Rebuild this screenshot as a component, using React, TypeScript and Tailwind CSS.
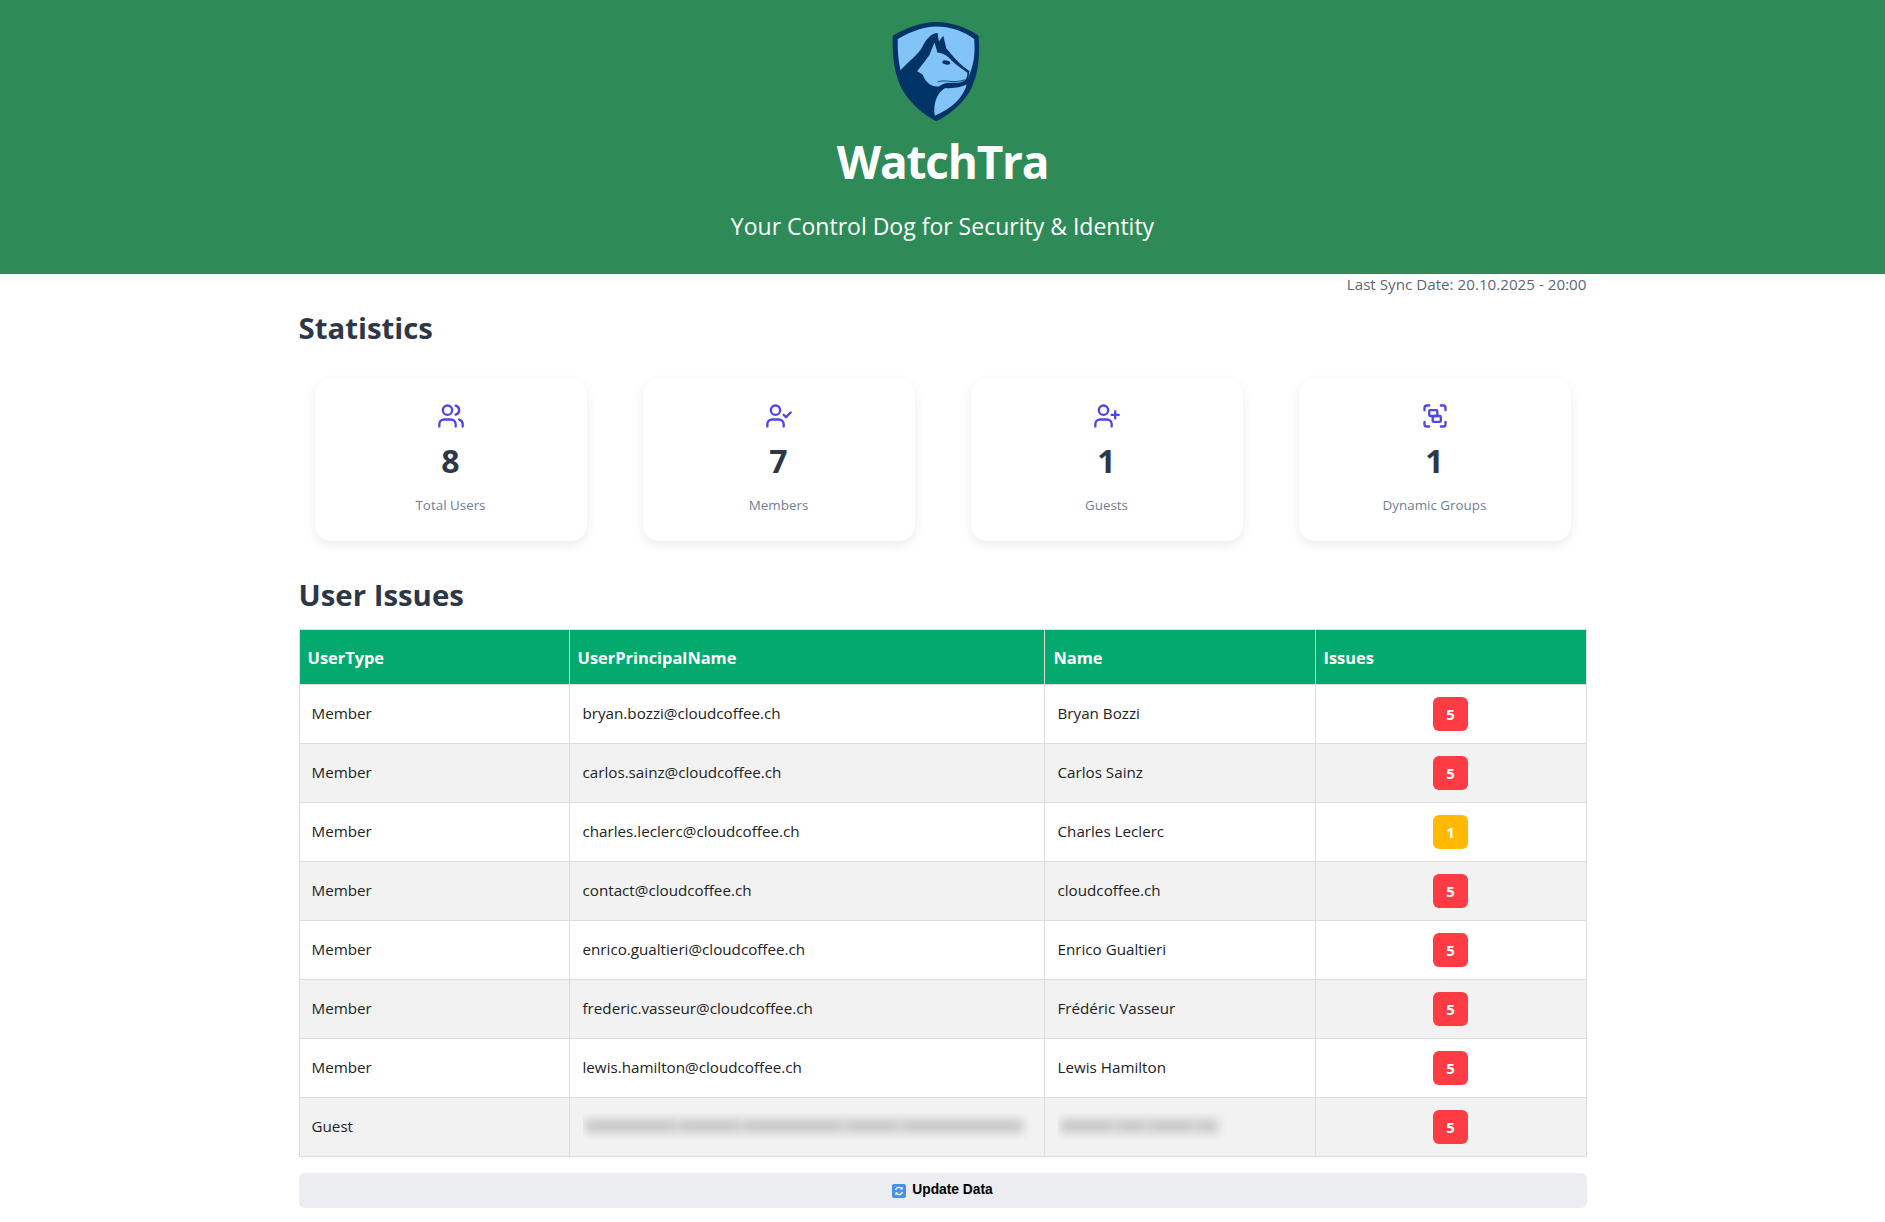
import React from 'react';
import { Users, UserCheck, UserPlus, Group, type LucideIcon } from 'lucide-react';

interface StatCard {
  icon: LucideIcon;
  value: number;
  label: string;
}

interface UserRow {
  type: string;
  upn: string;
  name: string;
  issues: number;
}

const stats: StatCard[] = [
  { icon: Users, value: 8, label: 'Total Users' },
  { icon: UserCheck, value: 7, label: 'Members' },
  { icon: UserPlus, value: 1, label: 'Guests' },
  { icon: Group, value: 1, label: 'Dynamic Groups' },
];

const rows: UserRow[] = [
  { type: 'Member', upn: 'bryan.bozzi@cloudcoffee.ch', name: 'Bryan Bozzi', issues: 5 },
  { type: 'Member', upn: 'carlos.sainz@cloudcoffee.ch', name: 'Carlos Sainz', issues: 5 },
  { type: 'Member', upn: 'charles.leclerc@cloudcoffee.ch', name: 'Charles Leclerc', issues: 1 },
  { type: 'Member', upn: 'contact@cloudcoffee.ch', name: 'cloudcoffee.ch', issues: 5 },
  { type: 'Member', upn: 'enrico.gualtieri@cloudcoffee.ch', name: 'Enrico Gualtieri', issues: 5 },
  { type: 'Member', upn: 'frederic.vasseur@cloudcoffee.ch', name: 'Frédéric Vasseur', issues: 5 },
  { type: 'Member', upn: 'lewis.hamilton@cloudcoffee.ch', name: 'Lewis Hamilton', issues: 5 },
  { type: 'Guest', upn: '', name: '', issues: 5 },
];

// viewBox is in the coordinates of a 3x crop of the logo
const Logo = () => (
  <svg viewBox="155 65 265 300" className="mr-[13px] -mb-[4px] h-[102px] w-[90px] -translate-y-[2px]">
    <path
      fill="#003366"
      d="M160 108C200 85 250 68 288 68C330 68 380 85 413 108C418 180 410 230 385 275C360 315 320 345 288 360C250 340 215 310 190 270C165 225 158 170 160 108Z"
    />
    <path
      fill="#82c4f8"
      d="M175 118C215 95 250 82 288 81C330 81 370 95 400 118C403 160 400 190 384 228C378 248 378 250 370 275L284 345L183 210C176 180 174 150 175 118Z"
    />
    <path
      fill="#003366"
      d="M183 210C210 180 235 165 248 140C258 118 275 100 292 100L296 125L309 108L318 146C335 165 358 195 386 212L380 258C365 300 330 330 286 352C240 330 205 280 183 210Z"
    />
    <path
      fill="#82c4f8"
      d="M232 213C245 195 262 175 268 165L283 128L292 158C305 158 322 165 334 182C350 197 365 207 380 217C380 236 372 244 350 247C330 247 312 245 296 258C275 258 258 248 248 222Z"
    />
    <path
      fill="#82c4f8"
      d="M378 252C368 290 335 322 284 344C278 310 290 275 315 262C340 264 360 260 378 252Z"
    />
    <ellipse cx="318" cy="187" rx="12" ry="6" fill="#003366" transform="rotate(12 318 187)" />
    <path d="M293 244C312 236 340 250 372 238" fill="none" stroke="#003366" strokeWidth="2.5" />
  </svg>
);

const BlurredBars = ({ width, bars }: { width: number; bars: number[] }) => (
  <div className="flex h-[27px] items-center overflow-hidden" style={{ width }}>
    <div className="flex items-center gap-[2px] pl-[2px] blur-[5px]">
      {bars.map((w, i) => (
        <div key={i} className="h-[14px] bg-[#c8c8c8]" style={{ width: w }} />
      ))}
    </div>
  </div>
);

const SyncIcon = () => (
  <svg viewBox="0 0 14 14" className="h-[14px] w-[14px]">
    <rect width="14" height="14" rx="2" fill="#4a90e8" />
    <path
      d="M3.5 6A3.6 3.6 0 0 1 10 5M10.5 8A3.6 3.6 0 0 1 4 9"
      fill="none"
      stroke="#fff"
      strokeWidth="1.4"
    />
    <path d="M10.6 2.8V5.6H7.8ZM3.4 11.2V8.4H6.2Z" fill="#fff" />
  </svg>
);

export default function App() {
  return (
    <div className="min-h-[1222px] bg-white font-['Open_Sans','Liberation_Sans',sans-serif] text-[#2d3748]">
      <header className="flex h-[274px] flex-col items-center bg-[#2e8b57] pt-[23px] text-white">
        <Logo />
        <h1 className="mt-[8px] text-[46px] leading-[64px] font-bold tracking-[-1.25px]">WatchTra</h1>
        <p className="mt-[17px] text-[23px] leading-[32px]">Your Control Dog for Security &amp; Identity</p>
      </header>

      <main className="mx-auto w-[1288px]">
        <p className="text-right text-[15.2px] leading-[20px] text-[#5f6672]">
          Last Sync Date: 20.10.2025 - 20:00
        </p>

        <h2 className="mt-[14px] text-[29.4px] leading-[40px] font-bold">Statistics</h2>

        <div className="mt-[30px] grid grid-cols-4 gap-[56px] px-[16px]">
          {stats.map(({ icon: Icon, value, label }) => (
            <div
              key={label}
              className="flex h-[163px] flex-col items-center rounded-2xl bg-white pt-[24px] shadow-[0_4px_12px_rgba(0,0,0,0.08)]"
            >
              <Icon className="h-[28px] w-[28px] text-[#4f46e5]" strokeWidth={2} />
              <div className="mt-[11px] text-[32px] leading-[40px] font-bold">{value}</div>
              <div className="mt-[14px] text-[13.4px] leading-[20px] text-[#718096]">{label}</div>
            </div>
          ))}
        </div>

        <h2 className="mt-[34px] text-[29.4px] leading-[40px] font-bold">User Issues</h2>

        <table className="mt-[14px] w-full table-fixed border-collapse text-[15.2px] text-[#222]">
          <thead>
            <tr className="h-[55px] bg-[#04aa6d] text-left text-[16.4px] font-bold text-white">
              <th className="w-[270px] border border-[#ddd] pt-[2px] pl-[8px]">UserType</th>
              <th className="w-[475px] border border-[#ddd] pt-[2px] pl-[8px]">UserPrincipalName</th>
              <th className="w-[271px] border border-[#ddd] pt-[2px] pl-[9px]">Name</th>
              <th className="border border-[#ddd] pt-[2px] pl-[8px]">Issues</th>
            </tr>
          </thead>
          <tbody>
            {rows.map((row, i) => (
              <tr key={i} className={`h-[59px] ${i % 2 === 1 ? 'bg-[#f2f2f2]' : 'bg-white'}`}>
                <td className="border border-[#ddd] px-[12px] pb-[2px]">{row.type}</td>
                <td className="border border-[#ddd] pr-[12px] pb-[2px] pl-[13px]">
                  {row.upn || <BlurredBars width={449} bars={[92, 62, 100, 54, 122]} />}
                </td>
                <td className="border border-[#ddd] pr-[12px] pb-[2px] pl-[13px]">
                  {row.name || <BlurredBars width={180} bars={[54, 30, 46, 22]} />}
                </td>
                <td className="border border-[#ddd] px-[12px] text-center">
                  <span
                    className={`inline-flex h-[34px] w-[35px] items-center justify-center rounded-md text-[15px] font-bold text-white ${
                      row.issues > 1 ? 'bg-[#ff3b43]' : 'bg-[#ffb900]'
                    }`}
                  >
                    {row.issues}
                  </span>
                </td>
              </tr>
            ))}
          </tbody>
        </table>

        <button className="mt-[16px] flex h-[35px] w-full items-center justify-center gap-[6px] rounded-md bg-[#ebedf0] font-['Liberation_Sans',sans-serif] text-[13.8px] font-bold text-black">
          <SyncIcon />
          Update Data
        </button>
      </main>
    </div>
  );
}
